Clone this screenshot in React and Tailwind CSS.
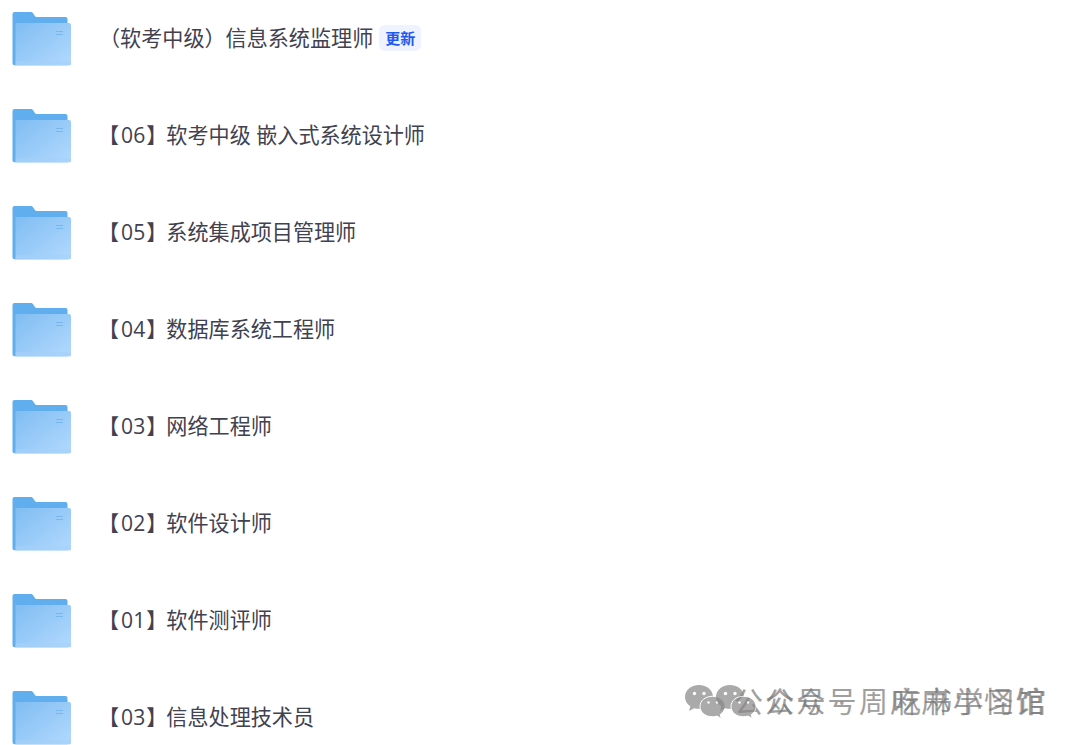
const folders = [
  { id: 1, name: "（软考中级）信息系统监理师", updated: true },
  { id: 2, code: "06", name: "软考中级 嵌入式系统设计师" },
  { id: 3, code: "05", name: "系统集成项目管理师" },
  { id: 4, code: "04", name: "数据库系统工程师" },
  { id: 5, code: "03", name: "网络工程师" },
  { id: 6, code: "02", name: "软件设计师" },
  { id: 7, code: "01", name: "软件测评师" },
  { id: 8, code: "03", name: "信息处理技术员" },
];

const FolderIcon = () => (
  <svg width="60" height="56" viewBox="0 0 60 56" className="shrink-0">
    <defs>
      <linearGradient id="front" x1="0" y1="0" x2="1" y2="1">
        <stop offset="0" stopColor="#80bdf2" />
        <stop offset="1" stopColor="#b2d9fe" />
      </linearGradient>
    </defs>
    <path
      d="M0.5 3a2 2 0 0 1 2-2H19q1.200 0 1.900 1l2 3q.6.9 1.700.9H53.500a2 2 0 0 1 2 2V54.300H2.500a2 2 0 0 1-2-2Z"
      fill="#60aeee"
    />
    <path d="M3.500 12H57a2 2 0 0 1 2 2V52a2 2 0 0 1-2 2.300H3.500Z" fill="url(#front)" />
    <path d="M3.500 50H59V52a2 2 0 0 1-2 2.300H3.500Z" fill="#a5d0f8" opacity="0.6" />
    <path d="M44 20.500h7M44 23.500h7" stroke="#78b7ee" strokeWidth="1" />
  </svg>
);

// Two chat bubbles, the larger one behind
const WechatIcon = () => (
  <svg width="44" height="36" viewBox="0 0 44 36" className="shrink-0">
    <path
      d="M15 1C7 1 1 6.200 1 13c0 4 2 7.200 5.300 9.300L5 27l5.200-2.800c1.500.4 3.200.6 4.800.6C23 24.800 29 19.800 29 13S23 1 15 1Z"
      fill="#878787"
    />
    <path
      d="M28.500 12.300c-7.300 0-12.500 4.400-12.500 10.200s5.200 10.200 12.500 10.200c1.500 0 3-.2 4.400-.6l4.500 2.300-1.200-3.800c3.100-1.900 4.800-4.800 4.800-8.100 0-5.800-5.200-10.200-12.500-10.200Z"
      fill="#878787"
      stroke="#fff"
    />
    <g fill="#fff">
      <circle cx="10.500" cy="9.500" r="1.700" />
      <circle cx="20" cy="9.500" r="1.700" />
      <circle cx="24.500" cy="18.500" r="1.200" />
      <circle cx="33" cy="18.500" r="1.200" />
    </g>
  </svg>
);

const Watermark = ({ children, className }) => (
  <div
    className={`absolute top-[684px] flex items-center text-[29px] leading-9 tracking-[2.300px] whitespace-pre text-[#777] opacity-70 ${className}`}
  >
    <WechatIcon />
    {children}
  </div>
);

const App = () => {
  return (
    <div className="relative h-[745px] w-[1080px] overflow-hidden bg-white font-['Open_Sans','Noto_Sans_CJK_SC',sans-serif]">
      <ul>
        {folders.map((folder) => (
          <li key={folder.id} className="flex h-[97px] items-start pt-[11px] pl-3">
            <FolderIcon />
            <div className="ml-7 flex h-[53px] items-center">
              <span className="text-[21.100px] leading-8 whitespace-pre text-[#41414f]">
                {folder.code && (
                  <>
                    <span className="mr-0.5 -ml-0.5">【</span>
                    {folder.code}
                    <span className="mr-[-1px] ml-px">】</span>
                  </>
                )}
                {folder.updated ? (
                  <span className="-ml-px">{folder.name}</span>
                ) : (
                  folder.name
                )}
              </span>
              {folder.updated && (
                <span className="ml-1.5 flex h-[26px] items-center rounded-md bg-[#eff2ff] px-1.5 text-[15px] leading-6 font-bold text-[#1f5af0]">
                  更新
                </span>
              )}
            </div>
          </li>
        ))}
      </ul>
      <Watermark className="left-[684px]">
        <span className="ml-1.5">公众号</span>
        <span className="w-16 pl-2.5">·</span>
        <span>吃书学习馆</span>
      </Watermark>
      <Watermark className="left-[715px]">
        <span className="ml-1.5">公众号周麻麻小怪馆</span>
      </Watermark>
    </div>
  );
};

export default App;
